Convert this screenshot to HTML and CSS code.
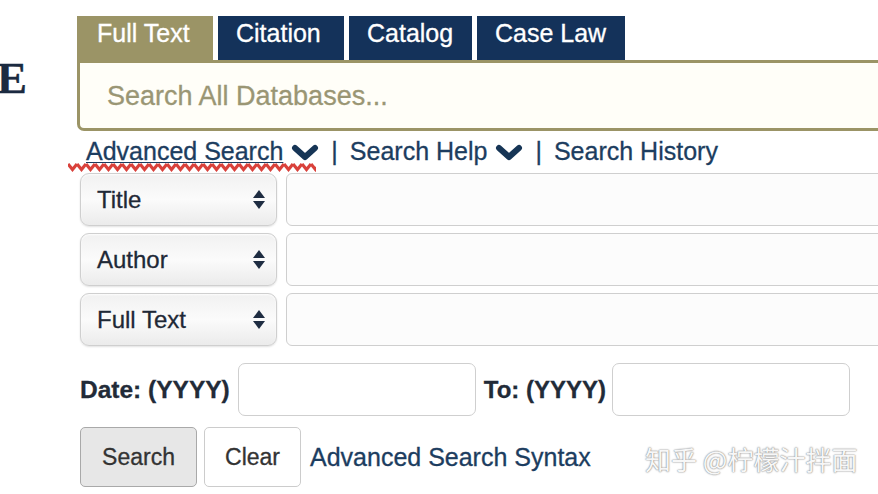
FILE: index.html
```html
<!DOCTYPE html>
<html lang="en">
<head>
    <meta charset="UTF-8" />
    <meta name="viewport" content="width=device-width, initial-scale=1.0" />
    <title>Library Search</title>
    <link rel="stylesheet" href="styles.css">
</head>
<body>
    <div class="page">
        <div class="logo">E</div>
        <div class="search-area">
            <div class="tabs">
                <div class="tab active">Full Text</div>
                <div class="tab">Citation</div>
                <div class="tab">Catalog</div>
                <div class="tab">Case Law</div>
            </div>
            <div class="search-box">
                <input type="text" placeholder="Search All Databases..." />
            </div>
            <div class="links">
                <span class="spell">
                    <a href="#">Advanced Search</a>
                    <svg class="chevron" width="28" height="18" viewBox="0 0 28 18"><polyline points="4,4 14,13 24,4" fill="none" stroke="#163556" stroke-width="6" stroke-linejoin="round" stroke-linecap="round"/></svg>
                    <svg class="squiggle" width="248" height="10" viewBox="0 0 248 10">
                        <defs>
                            <pattern id="zz" width="9" height="10" patternUnits="userSpaceOnUse">
                                <polyline points="0,2 4.5,7.5 9,2" fill="none" stroke="#d9413b" stroke-width="3.2"/>
                            </pattern>
                        </defs>
                        <rect width="248" height="10" fill="url(#zz)"/>
                    </svg>
                </span>
                <span class="sep">|</span>
                <a href="#">Search Help</a>
                <svg class="chevron" width="28" height="18" viewBox="0 0 28 18"><polyline points="4,4 14,13 24,4" fill="none" stroke="#163556" stroke-width="6" stroke-linejoin="round" stroke-linecap="round"/></svg>
                <span class="sep">|</span>
                <a href="#">Search History</a>
            </div>

            <div class="field-rows">
                <div class="field-row">
                    <div class="select">Title <span class="arrows"><i class="up"></i><i class="down"></i></span></div>
                    <input type="text" class="field" />
                </div>
                <div class="field-row">
                    <div class="select">Author <span class="arrows"><i class="up"></i><i class="down"></i></span></div>
                    <input type="text" class="field" />
                </div>
                <div class="field-row">
                    <div class="select">Full Text <span class="arrows"><i class="up"></i><i class="down"></i></span></div>
                    <input type="text" class="field" />
                </div>
            </div>

            <div class="date-row">
                <label>Date: (YYYY)</label>
                <input type="text" class="date" />
                <label class="to">To: (YYYY)</label>
                <input type="text" class="date" />
            </div>

            <div class="button-row">
                <button class="btn btn-search">Search</button>
                <button class="btn btn-clear">Clear</button>
                <a href="#">Advanced Search Syntax</a>
            </div>
        </div>
    </div>
    <div class="watermark">知乎 @柠檬汁拌面</div>
</body>
</html>
```

FILE: styles.css
```css
body {
    margin: 0;
    background-color: #ffffff;
    font-family: "Liberation Sans", Arial, sans-serif;
    color: #222b38;
    overflow: hidden;
    width: 878px;
    height: 494px;
    position: relative;
    -webkit-text-stroke: 0.3px;
}

.page {
    display: flex;
}

.logo {
    width: 80px;
    flex-shrink: 0;
    margin-left: -3px;
    padding-top: 53px;
    font-family: "Liberation Serif", serif;
    font-weight: bold;
    font-size: 45px;
    line-height: 50px;
    color: #1b2a40;
}

.search-area {
    width: 860px;
    flex-shrink: 0;
}

.tabs {
    display: flex;
    gap: 5px;
    padding-top: 16px;
}

.tab {
    height: 44px;
    box-sizing: border-box;
    padding: 2px 0 0 20px;
    background-color: #14325a;
    color: #ffffff;
    font-size: 25px;
    line-height: 30px;
}

.tab.active {
    background-color: #9b9466;
}

.tab:nth-child(1) { width: 136px; }
.tab:nth-child(2) { width: 126px; padding-left: 18px; }
.tab:nth-child(3) { width: 123px; padding-left: 18px; }
.tab:nth-child(4) { width: 148px; padding-left: 18px; }

.search-box {
    height: 71px;
    box-sizing: border-box;
    border: 3px solid #9b9466;
    border-radius: 0 0 0 7px;
    background-color: #fffef8;
    display: flex;
    align-items: center;
}

.search-box input {
    border: none;
    background: transparent;
    outline: none;
    font-family: inherit;
    font-size: 27px;
    margin: 2px 0 0 25px;
    width: 600px;
    -webkit-text-stroke: 0.3px;
}

.search-box input::placeholder {
    color: #9a9674;
}

.links {
    display: flex;
    align-items: center;
    height: 40px;
    padding-left: 9px;
    font-size: 25px;
    white-space: nowrap;
}

.links a,
.button-row a {
    color: #1c3d60;
    text-decoration: none;
}

.spell {
    position: relative;
    display: flex;
    align-items: center;
}

.spell a {
    text-decoration: underline;
    text-decoration-thickness: 1px;
    text-underline-offset: 2px;
}

.squiggle {
    position: absolute;
    left: -18px;
    bottom: -6px;
}

.chevron {
    margin: 4px 8px 0 8px;
}

.sep {
    color: #1c3d60;
    margin: 0 12px 0 4px;
}

.field-rows {
    display: grid;
    gap: 7px;
    padding-top: 2px;
}

.field-row {
    display: flex;
    gap: 9px;
    margin-left: 3px;
}

.select {
    width: 197px;
    height: 53px;
    box-sizing: border-box;
    border: 1px solid #cfcfcf;
    border-radius: 9px;
    background: linear-gradient(#f1f1f1, #fbfbfb 50%, #ebebeb);
    box-shadow: inset 0 1px 2px rgba(255, 255, 255, 0.9), 0 1px 2px rgba(0, 0, 0, 0.12);
    display: flex;
    align-items: center;
    justify-content: space-between;
    padding: 0 11px 0 16px;
    font-size: 24px;
    color: #1f2937;
}

.arrows {
    display: flex;
    flex-direction: column;
    gap: 3px;
}

.arrows i {
    width: 0;
    height: 0;
    border-left: 6px solid transparent;
    border-right: 6px solid transparent;
}

.arrows .up {
    border-bottom: 8px solid #1f2d42;
}

.arrows .down {
    border-top: 8px solid #1f2d42;
}

.field {
    flex: 1;
    height: 53px;
    box-sizing: border-box;
    border: 1px solid #cfcfcf;
    border-radius: 6px;
    background: #fcfcfc;
}

.date-row {
    display: flex;
    align-items: center;
    gap: 8px;
    margin: 17px 0 0 3px;
}

.date-row label {
    font-weight: bold;
    font-size: 24.5px;
    color: #222b38;
}

.date-row .to {
    font-size: 24px;
    margin-right: -2px;
}

.date {
    width: 238px;
    height: 53px;
    box-sizing: border-box;
    border: 1px solid #cfcfcf;
    border-radius: 7px;
}

.button-row {
    display: flex;
    align-items: center;
    gap: 7px;
    margin: 11px 0 0 3px;
    font-size: 25px;
}

.btn {
    height: 60px;
    box-sizing: border-box;
    font-family: inherit;
    font-size: 23px;
    color: #333333;
    border-radius: 5px;
    padding: 0;
    -webkit-text-stroke: 0.3px;
}

.btn-search {
    width: 117px;
    background-color: #e7e7e7;
    border: 1px solid #a9a9a9;
}

.btn-clear {
    width: 97px;
    background-color: #ffffff;
    border: 1px solid #cccccc;
    margin-right: 2px;
}

.watermark {
    position: absolute;
    left: 645px;
    top: 440px;
    font-family: "Noto Sans CJK SC", sans-serif;
    font-size: 26px;
    color: #f7f7f7;
    -webkit-text-stroke: 0;
    text-shadow: 0 0 2px #8a8a8a, 0 0 1px #8a8a8a;
}
```
